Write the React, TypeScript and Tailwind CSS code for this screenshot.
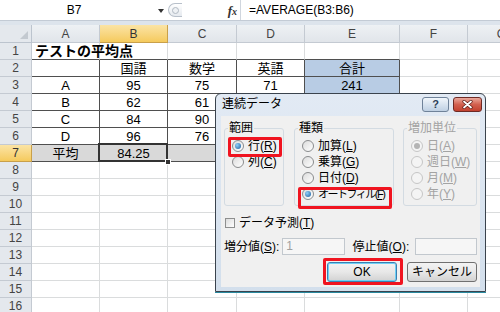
import React from 'react';

// grid line styles
const G = 'border-r border-b border-[#dadcdd]';
const T = 'border-r border-b border-[#4f4f4f]';
const TB = 'border-r border-b border-r-[#dadcdd] border-b-[#4f4f4f]';
const BLUE = 'bg-[#b8cce4]';
const GRAY = 'bg-[#d9d9d9]';

type Cell = { cls: string; t?: string; sel?: boolean };

const colNames = ['A', 'B', 'C', 'D', 'E', 'F', 'G'];

const empty = (): Cell[] => [{ cls: G }, { cls: G }, { cls: G }, { cls: G }, { cls: G }, { cls: G }, { cls: G }];

// D4:E7 sit under the dialog, so they stay blank
const rows: Cell[][] = [
  [
    { cls: `${TB} justify-start pl-[3px] whitespace-nowrap text-[14px] font-bold`, t: 'テストの平均点' },
    { cls: TB }, { cls: TB }, { cls: TB }, { cls: TB }, { cls: G }, { cls: G },
  ],
  [
    { cls: T }, { cls: T, t: '国語' }, { cls: T, t: '数学' }, { cls: T, t: '英語' },
    { cls: `${T} ${BLUE}`, t: '合計' }, { cls: G }, { cls: G },
  ],
  [
    { cls: T, t: 'A' }, { cls: T, t: '95' }, { cls: T, t: '75' }, { cls: T, t: '71' },
    { cls: `${T} ${BLUE}`, t: '241' }, { cls: G }, { cls: G },
  ],
  [
    { cls: T, t: 'B' }, { cls: T, t: '62' }, { cls: T, t: '61' }, { cls: T },
    { cls: `${T} ${BLUE}` }, { cls: G }, { cls: G },
  ],
  [
    { cls: T, t: 'C' }, { cls: T, t: '84' }, { cls: T, t: '90' }, { cls: T },
    { cls: `${T} ${BLUE}` }, { cls: G }, { cls: G },
  ],
  [
    { cls: T, t: 'D' }, { cls: T, t: '96' }, { cls: T, t: '76' }, { cls: T },
    { cls: `${T} ${BLUE}` }, { cls: G }, { cls: G },
  ],
  [
    { cls: `${T} ${GRAY}`, t: '平均' }, { cls: `${T} ${GRAY}`, t: '84.25', sel: true },
    { cls: `${T} ${GRAY}` }, { cls: `${T} ${GRAY}` }, { cls: `${T} ${GRAY}` }, { cls: G }, { cls: G },
  ],
  empty(), empty(), empty(), empty(), empty(), empty(), empty(), empty(), empty(),
];

function Radio({ on, disabled }: { on?: boolean; disabled?: boolean }) {
  return (
    <span
      className={`w-[12px] h-[12px] rounded-full border flex items-center justify-center shrink-0 ${
        disabled ? 'border-[#c6c6c6] bg-[#f4f4f4]' : 'border-[#8a8c8e] bg-gradient-to-br from-[#dcdcdc] to-white'
      }`}
    >
      {on && (
        <span
          className={`w-[6px] h-[6px] rounded-full ${
            disabled ? 'bg-[#b4b4b4]' : 'bg-[radial-gradient(circle_at_35%_35%,#8fd0f8,#1b5d9f)]'
          }`}
        />
      )}
    </span>
  );
}

function Opt({ label, u, on, disabled, tight }: { label: string; u: string; on?: boolean; disabled?: boolean; tight?: boolean }) {
  return (
    <div className={`h-[16px] flex items-center gap-[4px] ${disabled ? 'text-[#a3a3a3]' : 'text-black'}`}>
      <Radio on={on} disabled={disabled} />
      <span className={`leading-none whitespace-nowrap ${tight ? 'text-[11px] tracking-[-1.5px]' : ''}`}>
        {label}(<span className="underline">{u}</span>)
      </span>
    </div>
  );
}

function Group({ title, w, disabled, children }: { title: string; w: string; disabled?: boolean; children: React.ReactNode }) {
  return (
    <div className={`relative h-[78px] ${w} border border-[#d3dbe2] rounded-[3px] pt-[9px] pl-[7px]`}>
      <span
        className={`absolute -top-[8px] left-[3px] px-[1px] bg-[#f0f0f0] leading-[14px] ${
          disabled ? 'text-[#a3a3a3]' : 'text-black'
        }`}
      >
        {title}
      </span>
      {children}
    </div>
  );
}

function Dialog() {
  return (
    <div className="absolute left-[215px] top-[93px] w-[271px] h-[199px] rounded-t-[6px] border border-[#3a434d] bg-gradient-to-b from-[#e2eaf4] to-[#d3dfec] shadow-[0_1px_0_#2a8aa0] text-[12px]">
      {/* title bar */}
      <div className="h-[22px] flex items-start pt-[3px] pl-[6px] pr-[3px]">
        <span className="leading-[15px] text-black">連続データ</span>
        <div className="ml-auto flex gap-[4px]">
          <div className="w-[27px] h-[15px] rounded-[3px] border border-[#6f8299] bg-gradient-to-b from-[#f1f6fb] to-[#bfd0e3] flex items-center justify-center text-[11px] font-bold leading-none text-[#2c3e57]">
            ?
          </div>
          <div className="w-[29px] h-[15px] rounded-[3px] border border-[#6e2a24] bg-gradient-to-b from-[#e9a89c] via-[#d2604f] to-[#c2412f] flex items-center justify-center">
            <svg width="11" height="9" viewBox="0 0 11 9">
              <path d="M2 1.5 L9 7.5 M9 1.5 L2 7.5" stroke="#5a1a14" strokeWidth="3.2" strokeLinecap="round" />
              <path d="M2 1.5 L9 7.5 M9 1.5 L2 7.5" stroke="#ffffff" strokeWidth="1.8" strokeLinecap="round" />
            </svg>
          </div>
        </div>
      </div>

      {/* content */}
      <div className="relative mx-[5px] h-[171px] bg-[#f0f0f0] pt-[12px] pl-[3px] pr-[3px]">
        <div className="flex">
          <Group title="範囲" w="w-[60px]">
            <Opt label="行" u="R" on />
            <Opt label="列" u="C" />
            <span className="absolute left-[3px] top-[8px] w-[54px] h-[20px] border-[3px] border-[#f01420] rounded-[2px]" />
          </Group>
          <div className="ml-[10px]">
            <Group title="種類" w="w-[100px]">
              <Opt label="加算" u="L" />
              <Opt label="乗算" u="G" />
              <Opt label="日付" u="D" />
              <Opt label="オートフィル" u="F" on tight />
              <span className="absolute left-[3px] top-[58px] w-[94px] h-[22px] border-[3px] border-[#f01420] rounded-[2px]" />
            </Group>
          </div>
          <div className="ml-[9px]">
            <Group title="増加単位" w="w-[74px]" disabled>
              <Opt label="日" u="A" on disabled />
              <Opt label="週日" u="W" disabled />
              <Opt label="月" u="M" disabled />
              <Opt label="年" u="Y" disabled />
            </Group>
          </div>
        </div>

        <div className="mt-[9px] h-[16px] flex items-center gap-[4px] pl-[1px]">
          <span className="w-[10px] h-[10px] border border-[#8e8f8f] bg-gradient-to-br from-[#dcdcdc] to-white" />
          <span className="leading-none">
            データ予測(<span className="underline">T</span>)
          </span>
        </div>

        <div className="mt-[7px] h-[17px] flex items-center">
          <span className="w-[59px] leading-none whitespace-nowrap">
            増分値(<span className="underline">S</span>):
          </span>
          <div className="w-[63px] h-[17px] border border-[#c2c8ce] bg-[#f6f6f6] text-[#a0a0a0] pl-[3px] leading-[15px]">1</div>
          <span className="w-[71px] pl-[8px] leading-none whitespace-nowrap">
            停止値(<span className="underline">O</span>):
          </span>
          <div className="w-[63px] h-[17px] border border-[#c2c8ce] bg-[#f6f6f6]" />
        </div>

        <div className="mt-[7px] flex justify-end gap-[10px]">
          <div className="w-[70px] h-[20px] rounded-[3px] border border-[#3c7fb1] shadow-[inset_0_0_0_1px_#6fd0f5] bg-gradient-to-b from-[#f3f3f3] via-[#e8e8e8] to-[#d2d2d2] flex items-center justify-center leading-none">
            OK
          </div>
          <div className="w-[70px] h-[20px] rounded-[3px] border border-[#707070] bg-gradient-to-b from-[#f3f3f3] via-[#e8e8e8] to-[#d2d2d2] flex items-center justify-center leading-none">
            キャンセル
          </div>
        </div>

        <span className="absolute left-[102px] top-[142px] w-[80px] h-[27px] border-[3px] border-[#f01420] rounded-[2px]" />
      </div>
    </div>
  );
}

export default function App() {
  return (
    <div className="relative w-[500px] h-[312px] overflow-hidden bg-white font-['Liberation_Sans','Noto_Sans_CJK_JP',sans-serif] text-black">
      {/* formula bar */}
      <div className="h-[21px] flex bg-white border-b border-[#c3cbd5]">
        <div className="w-[168px] relative flex items-center justify-center text-[12px]">
          <span className="pr-[20px] leading-none">B7</span>
          <span className="absolute right-[4px] top-[9px] w-0 h-0 border-l-[3px] border-r-[3px] border-t-[4px] border-l-transparent border-r-transparent border-t-[#333]" />
        </div>
        <div className="w-[14px] my-[3px] rounded-l-full border border-r-0 border-[#b8c0ca] bg-gradient-to-b from-white to-[#e6eaef] flex items-center justify-center">
          <span className="w-[7px] h-[7px] rounded-full border border-[#b0b8c2] bg-[#eef1f4]" />
        </div>
        <div className="w-[58px] flex items-center justify-end pr-[3px]">
          <span className="font-['Liberation_Serif',serif] italic font-bold text-[13px] leading-none text-[#333]">
            f<span className="text-[10px]">x</span>
          </span>
        </div>
        <div className="w-px bg-[#d0d6de]" />
        <div className="flex-1 flex items-center pl-[8px] text-[12px] leading-none whitespace-nowrap">=AVERAGE(B3:B6)</div>
      </div>
      <div className="h-[4px] bg-[#dde4ec]" />

      {/* column headers */}
      <div className="h-[18px] grid grid-cols-[32px_68px_68px_69px_68px_95px_68px_68px]">
        <div className="relative bg-[#e4e8ed] border-r border-b border-[#bcc4ce]">
          <svg className="absolute right-[3px] bottom-[3px]" width="8" height="8" viewBox="0 0 8 8">
            <polygon points="8,0 8,8 0,8" fill="#c3c9d0" />
          </svg>
        </div>
        {colNames.map((c) => (
          <div
            key={c}
            className={`border-r border-b flex items-center justify-center text-[12px] leading-none ${
              c === 'B'
                ? 'bg-gradient-to-b from-[#fbe4a4] to-[#f5ca5c] border-[#c9a04a] text-[#333]'
                : 'bg-gradient-to-b from-[#eef1f4] to-[#e1e5ea] border-[#c4cad2] text-[#444]'
            }`}
          >
            {c}
          </div>
        ))}
      </div>

      {/* rows */}
      {rows.map((r, i) => (
        <div key={i} className="h-[17px] grid grid-cols-[32px_68px_68px_69px_68px_95px_68px_68px]">
          <div
            className={`border-r border-b flex items-center justify-center text-[12px] leading-none ${
              i === 6
                ? 'bg-gradient-to-b from-[#fbe4a4] to-[#f5ca5c] border-[#c9a04a] text-[#333]'
                : 'bg-[#e4e8ed] border-[#c4cad2] text-[#444]'
            }`}
          >
            {i + 1}
          </div>
          {r.map((c, j) => (
            <div key={j} className={`relative flex items-center justify-center text-[13px] leading-none ${c.cls} ${c.sel ? 'z-10' : ''}`}>
              {c.t}
              {c.sel && (
                <>
                  <span className="absolute -left-[2px] -top-[2px] -right-[1px] -bottom-[1px] border-2 border-[#333]" />
                  <span className="absolute -right-[4px] -bottom-[4px] w-[6px] h-[6px] bg-[#333] border border-white" />
                </>
              )}
            </div>
          ))}
        </div>
      ))}

      <Dialog />
    </div>
  );
}
